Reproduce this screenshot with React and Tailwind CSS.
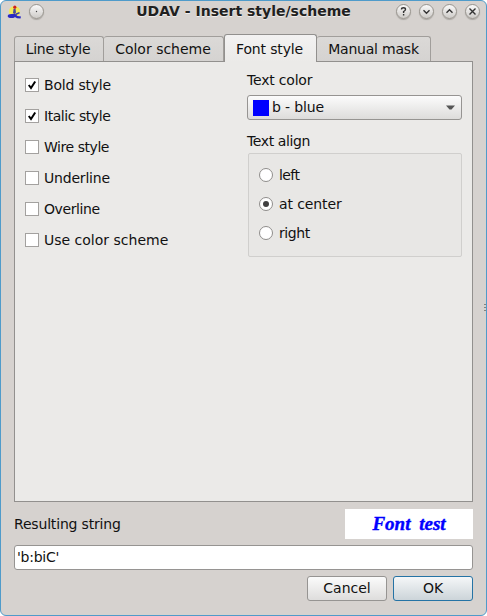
import React from 'react';

function TitleButton({ children }) {
  return (
    <span className="flex h-[15px] w-[15px] items-center justify-center rounded-full border border-[#99958f] bg-linear-to-b from-[#fafafa] to-[#cecbc8] shadow-[0_1px_1px_#aaa6a2]">
      <svg width="13" height="13" viewBox="0 0 13 13" fill="none" stroke="#333" strokeWidth="1.4" className="shrink-0">
        {children}
      </svg>
    </span>
  );
}

function AppIcon() {
  return (
    <svg width="16" height="16" viewBox="0 0 16 16" className="shrink-0">
      <circle cx="7.5" cy="7.5" r="5.6" fill="#f1e95c" />
      <path d="M6.5 5 L8.5 4.5 L9 8.5 L7.5 10 L6 9 Z" fill="#4a4a9c" />
      <ellipse cx="4.5" cy="12" rx="3.8" ry="2" fill="#2a2ac4" />
      <path d="M4.5 10 L8 9.8 L10.5 12 L14 12.6 L13.5 14.5 L10 14.2 L7 12.5 Z" fill="#2a2ac4" />
      <path d="M8.5 10.5 L12.5 8.6" stroke="#3a3aa8" strokeWidth="1.6" />
      <circle cx="7.8" cy="3.2" r="1.6" fill="#d02020" />
    </svg>
  );
}

function Tab({ label, className }) {
  return (
    <div className={`flex h-[25px] items-center justify-center rounded-t-[3px] border-t border-r border-[#a19e9b] bg-linear-to-b from-[#dbd9d7] to-[#d5d3d1] ${className}`}>
      {label}
    </div>
  );
}

function Check({ label, checked, className = '' }) {
  return (
    <div className="flex h-[31px] items-center gap-[5px]">
      <span className="h-[14px] w-[14px] shrink-0 border border-[#a3a19f] bg-white">
        {checked && (
          <svg width="12" height="12" viewBox="0 0 12 12" fill="none" stroke="#000" strokeWidth="2">
            <path d="M2.8 6 L5 9 L9.2 2.5" />
          </svg>
        )}
      </span>
      <span className={className}>{label}</span>
    </div>
  );
}

function Radio({ label, checked, className = '' }) {
  return (
    <div className="flex h-[29px] items-center gap-[6px]">
      <span className="flex h-[14px] w-[14px] shrink-0 items-center justify-center rounded-full border border-[#8f8d8b] bg-white">
        {checked && <span className="h-[6px] w-[6px] rounded-full bg-[#404040]" />}
      </span>
      <span className={className}>{label}</span>
    </div>
  );
}

export default function App() {
  return (
    <div className="h-[616px] w-[487px] bg-white">
      <div className="relative flex h-full flex-col rounded-[6px] border border-[#4f9bca] bg-[#d6d2cf] font-['DejaVu_Sans',sans-serif] text-[14px] leading-[16px] whitespace-nowrap text-[#111]">
        <header className="flex h-[21px] items-center pr-[6px] pl-[6px]">
          <AppIcon />
          <span className="ml-[6px]">
            <TitleButton><circle cx="6.5" cy="6.5" r="0.7" fill="#444" stroke="none" /></TitleButton>
          </span>
          <h1 className="flex-1 pb-[2px] pl-[57px] text-center text-[14px] font-bold text-[#202020] [text-shadow:0_1px_0_#f0eeec]">UDAV - Insert style/scheme</h1>
          <div className="ml-[10px] flex gap-[8px]">
            <TitleButton><path d="M4.5 4.5 Q4.5 2.8 6.5 2.8 T8.5 4.5 Q8.5 5.5 6.6 6.5 V8 M6.6 9 V10.4" /></TitleButton>
            <TitleButton><path d="M3.5 5.2 L6.5 8.2 L9.5 5.2" /></TitleButton>
            <TitleButton><path d="M3.5 7.8 L6.5 4.8 L9.5 7.8" /></TitleButton>
            <TitleButton><path d="M3.5 3.5 L9.5 9.5 M9.5 3.5 L3.5 9.5" /></TitleButton>
          </div>
        </header>

        <nav className="z-10 mt-[11px] ml-[13px] flex h-[29px] items-end pb-[1px]">
          <Tab label="Line style" className="w-[90px] border-l pr-[2px] tracking-[-0.25px]" />
          <Tab label="Color scheme" className="w-[120px] pr-px" />
          <div className="-mb-px flex h-[28px] w-[93px] items-center justify-center rounded-t-[3px] border-x border-t border-[#92908e] bg-linear-to-b from-[#f3f2f2] to-[#ebeae8] pr-[2px] tracking-[-0.15px]">Font style</div>
          <Tab label="Manual mask" className="w-[114px] tracking-[-0.2px]" />
        </nav>

        <main className="mx-[13px] -mt-px flex h-[441px] border border-[#92908e] bg-[#ebeae8]">
          <section className="w-[232px] pt-[7px] pl-[10px]">
            <Check label="Bold style" checked className="tracking-[-0.2px]" />
            <Check label="Italic style" checked className="tracking-[-0.45px]" />
            <Check label="Wire style" className="tracking-[-0.45px]" />
            <Check label="Underline" className="tracking-[-0.2px]" />
            <Check label="Overline" className="tracking-[-0.4px]" />
            <Check label="Use color scheme" />
          </section>
          <section className="w-[215px] pt-[10px]">
            <div className="tracking-[-0.2px]">Text color</div>
            <div className="mt-[7px] flex h-[25px] items-center rounded-[3px] border border-[#969492] bg-linear-to-b from-[#fcfcfc] to-[#dddcdb] pr-[6px] pl-[5px]">
              <span className="h-4 w-4 bg-[#0000ff]" />
              <span className="ml-[3px] flex-1 pb-px tracking-[-0.15px]">b - blue</span>
              <svg width="9" height="5" viewBox="0 0 9 5"><path d="M0 0.5 H9 L5.5 4.5 H3.5 Z" fill="#555" /></svg>
            </div>
            <div className="mt-[13px] tracking-[-0.4px]">Text align</div>
            <div className="mt-[4px] ml-px h-[104px] rounded-[2px] border border-[#d0cfcd] bg-[#e8e7e5] pt-[6px] pl-[10px]">
              <Radio label="left" className="tracking-[-0.6px]" />
              <Radio label="at center" checked className="tracking-[-0.1px]" />
              <Radio label="right" className="tracking-[-0.4px]" />
            </div>
          </section>
        </main>

        <div className="mx-[13px] mt-[7px] flex h-[30px] items-center justify-between">
          <span className="tracking-[-0.18px]">Resulting string</span>
          <div className="flex h-[30px] w-[128px] items-center justify-center bg-white font-['Liberation_Serif',serif] text-[19px] font-bold text-[#0000ff] italic [-webkit-text-stroke:0.4px_#0000ff] [word-spacing:4px]">Font test</div>
        </div>
        <div className="mx-[13px] mt-[6px] flex h-[25px] items-center rounded-[3px] border border-[#969492] bg-white pb-px pl-[2px] tracking-[-0.25px]">'b:biC'</div>
        <div className="mr-[13px] mt-[6px] flex justify-end gap-[6px]">
          <button className="h-[25px] w-[80px] rounded-[3px] border border-[#969492] bg-linear-to-b from-[#fbfbfb] to-[#dedddc] pb-px">Cancel</button>
          <button className="h-[25px] w-[80px] rounded-[3px] border border-[#2573a5] bg-linear-to-b from-[#f5f7f8] to-[#ccd4d9] pb-px">OK</button>
        </div>

        <div className="absolute top-[303px] right-0 flex flex-col gap-[2px]">
          <span className="h-px w-[2px] bg-[#85827f]" />
          <span className="h-px w-[2px] bg-[#85827f]" />
          <span className="h-px w-[2px] bg-[#85827f]" />
        </div>
      </div>
    </div>
  );
}
